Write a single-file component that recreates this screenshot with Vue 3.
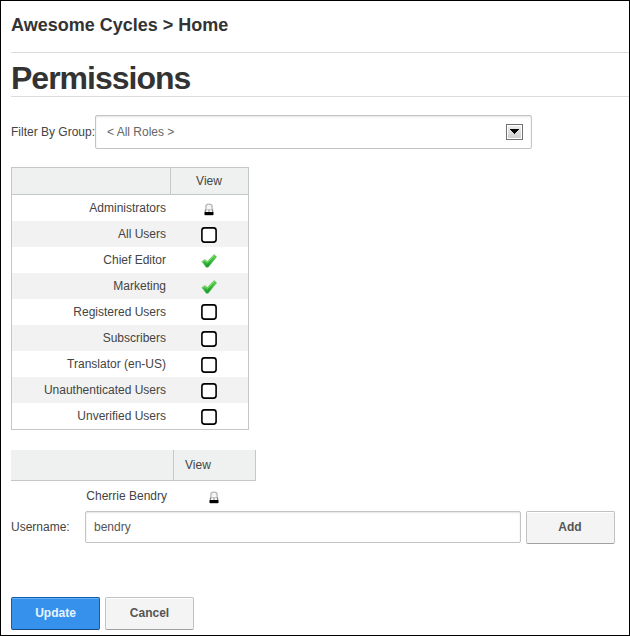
<script setup>
import { ref } from 'vue'

const roles = [
  { name: 'Administrators', state: 'lock' },
  { name: 'All Users', state: 'empty' },
  { name: 'Chief Editor', state: 'granted' },
  { name: 'Marketing', state: 'granted' },
  { name: 'Registered Users', state: 'empty', raised: true },
  { name: 'Subscribers', state: 'empty' },
  { name: 'Translator (en-US)', state: 'empty' },
  { name: 'Unauthenticated Users', state: 'empty' },
  { name: 'Unverified Users', state: 'empty' },
]
const username = ref('bendry')
</script>

<template>
  <main class="window">
    <h2 class="crumb">Awesome Cycles &gt; Home</h2>
    <h1 class="title">Permissions</h1>

    <div class="filter">
      <span class="filter-label">Filter By Group:</span>
      <div class="select">
        <span>&lt; All Roles &gt;</span>
        <span class="arrow">
          <svg width="9" height="5" viewBox="0 0 9 5" shape-rendering="crispEdges"><path d="M0 0H9V1H8V2H7V3H6V4H5V5H4V4H3V3H2V2H1V1H0Z" /></svg>
        </span>
      </div>
    </div>

    <div class="roles">
      <div class="role head">
        <div class="name"></div>
        <div class="view">View</div>
      </div>
      <div v-for="role in roles" :key="role.name" class="role">
        <div class="name">{{ role.name }}</div>
        <div class="view">
          <svg v-if="role.state === 'lock'" class="lock" width="10" height="13" viewBox="0 0 10 13">
            <path d="M1.9 8V3.4Q1.9 1.2 5 1.2T8.1 3.4V8" fill="#f6f6f6" stroke="#b8b8b8" stroke-width="1.3" />
            <path d="M.8 6.6H2V9H.8ZM8 6.6H9.2V9H8ZM4.5 6.6H5.5V9H4.5Z" fill="#888" />
            <path d="M2 6H8V6.7H2Z" fill="#bbb" />
            <path d="M.5 9H9.5V12H.5Z" fill="#000" />
            <path d="M1 12H9V12.6H1Z" fill="#aaa" />
          </svg>
          <svg v-else-if="role.state === 'granted'" class="check" width="16" height="16" viewBox="0 0 16 16">
            <defs>
              <linearGradient id="tick" x1="0" y1="0" x2="0.3" y2="1">
                <stop offset="0" stop-color="#7be060" />
                <stop offset=".5" stop-color="#46c440" />
                <stop offset="1" stop-color="#12962a" />
              </linearGradient>
            </defs>
            <path d="M.9 8.6L3.8 6.4L6.3 8.6L13 1.6L15.6 3.8L7.2 14.3H5.2Z" fill="url(#tick)" stroke="#6cbf66" stroke-width=".6" stroke-linejoin="round" />
            <path d="M2 8.5L3.7 7.2L6.3 9.6L13.1 2.5" fill="none" stroke="#a4ec88" stroke-width=".7" />
          </svg>
          <svg v-else class="box" :class="{ raised: role.raised }" width="16" height="16" viewBox="0 0 16 16">
            <rect x=".9" y=".9" width="14.2" height="14.2" rx="2.6" />
          </svg>
        </div>
      </div>
    </div>

    <div class="users-head">
      <div class="users-name"></div>
      <div class="users-view">View</div>
    </div>
    <div class="user">
      <span class="user-name">Cherrie Bendry</span>
      <svg width="10" height="13" viewBox="0 0 10 13">
        <path d="M1.9 8V3.4Q1.9 1.2 5 1.2T8.1 3.4V8" fill="#f6f6f6" stroke="#b8b8b8" stroke-width="1.3" />
        <path d="M.8 6.6H2V9H.8ZM8 6.6H9.2V9H8ZM4.5 6.6H5.5V9H4.5Z" fill="#888" />
        <path d="M2 6H8V6.7H2Z" fill="#bbb" />
        <path d="M.5 9H9.5V12H.5Z" fill="#000" />
        <path d="M1 12H9V12.6H1Z" fill="#aaa" />
      </svg>
    </div>

    <div class="add-row">
      <label class="add-label" for="username">Username:</label>
      <input id="username" v-model="username" class="field" type="text" />
      <button class="button add" type="button">Add</button>
    </div>

    <div class="actions">
      <button class="button primary" type="button">Update</button>
      <button class="button" type="button">Cancel</button>
    </div>
  </main>
</template>

<style>
body {
  background: #fff;
}
</style>

<style scoped>
.window {
  box-sizing: border-box;
  width: 630px;
  height: 636px;
  border: 1px solid #000;
  padding-left: 10px;
  overflow: hidden;
  font: 12px/16px "Liberation Sans", Arial, sans-serif;
  color: #444;
}
.crumb {
  box-sizing: border-box;
  height: 52px;
  margin: 0;
  padding-top: 13px;
  border-bottom: 1px solid #dcdcdc;
  font-size: 18px;
  line-height: 22px;
  color: #333;
}
.title {
  box-sizing: border-box;
  height: 44px;
  margin: 0;
  padding-top: 5px;
  border-bottom: 1px solid #dcdcdc;
  font-size: 32px;
  line-height: 40px;
  letter-spacing: -1px;
  color: #333;
}
.filter {
  display: flex;
  height: 34px;
  margin-top: 18px;
}
.filter-label {
  width: 84px;
  padding-top: 9px;
  white-space: nowrap;
}
.select {
  box-sizing: border-box;
  display: flex;
  align-items: center;
  justify-content: space-between;
  width: 437px;
  padding: 0 8px 0 11px;
  border: 1px solid #c4c4c4;
  border-radius: 2px;
  box-shadow: inset 0 1px 2px #e4e4e4;
  color: #666;
}
.arrow {
  box-sizing: border-box;
  display: flex;
  align-items: flex-start;
  justify-content: center;
  width: 17px;
  height: 16px;
  padding-top: 4px;
  border: 1px solid #707070;
  box-shadow: inset 0 0 0 1px #fff;
  background: linear-gradient(#f0f0f0, #ccc);
}
.arrow path {
  fill: #000;
}
.roles {
  box-sizing: border-box;
  width: 238px;
  margin-top: 18px;
  border: 1px solid #c4c8c8;
}
.role {
  display: flex;
  height: 26px;
}
.role:nth-child(even) {
  background: #fff;
}
.role:nth-child(odd) {
  background: #f2f2f2;
}
.role.head {
  background: #eef1f0;
  border-bottom: 1px solid #c4c8c8;
}
.name {
  box-sizing: border-box;
  width: 159px;
  padding: 5px 5px 0 0;
  text-align: right;
  white-space: nowrap;
}
.head .name {
  border-right: 1px solid #c4c8c8;
}
.view {
  box-sizing: border-box;
  display: flex;
  flex: 1;
  align-items: center;
  justify-content: center;
  padding-right: 1px;
}
.view .lock,
.view .check,
.view .box {
  margin-top: 2px;
}
.view .box.raised {
  margin-top: 0;
}
.box rect {
  fill: #fff;
  stroke: #000;
  stroke-width: 1.6;
}
.users-head {
  box-sizing: border-box;
  display: flex;
  width: 245px;
  height: 31px;
  margin-top: 20px;
  border-right: 1px solid #c4c8c8;
  border-bottom: 1px solid #c4c8c8;
  background: #eef1f0;
}
.users-name {
  width: 162px;
  border-right: 1px solid #c4c8c8;
}
.users-view {
  padding: 7px 0 0 11px;
}
.user {
  display: flex;
  align-items: center;
  height: 30px;
}
.user-name {
  width: 156px;
  margin-right: 42px;
  text-align: right;
}
.user svg {
  margin-top: 2px;
}
.add-row {
  display: flex;
  align-items: flex-start;
  height: 33px;
}
.add-label {
  width: 74px;
  padding-top: 8px;
}
.field {
  box-sizing: border-box;
  width: 436px;
  height: 32px;
  margin: 0 5px 0 0;
  padding: 0 8px;
  border: 1px solid #c4c4c4;
  border-radius: 2px;
  box-shadow: inset 0 1px 2px #e4e4e4;
  outline: 0;
  background: #fff;
  font: inherit;
  color: #555;
}
.button {
  box-sizing: border-box;
  width: 89px;
  height: 33px;
  margin: 0;
  padding: 0 0 2px;
  border: 1px solid #c2c2c2;
  border-bottom-color: #a0a0a0;
  border-radius: 2px;
  box-shadow: inset 0 1px #fff;
  background: #f4f4f4;
  font: bold 12px/16px "Liberation Sans", Arial, sans-serif;
  color: #555;
}
.add {
  padding-right: 1px;
}
.primary {
  border-color: #0b60b5;
  border-bottom-color: #174b80;
  box-shadow: inset 0 1px #6fb2f5;
  background: #3691ec;
  color: #e9f4ff;
}
.actions {
  display: flex;
  gap: 5px;
  margin-top: 53px;
}
</style>
